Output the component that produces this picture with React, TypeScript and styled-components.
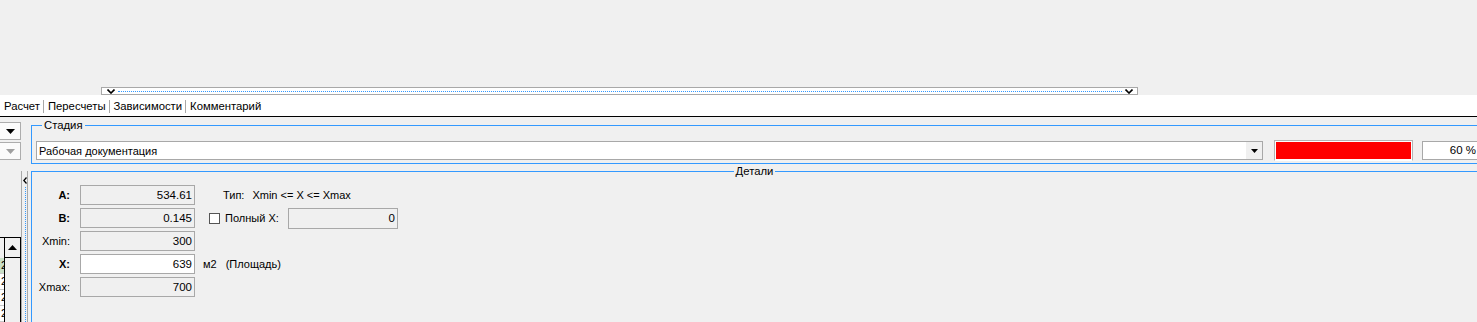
import React from "react";
import styled, { createGlobalStyle } from "styled-components";

const Global = createGlobalStyle`
  html, body { margin: 0; padding: 0; overflow: hidden; background: #f0f0f0; }
  body { font-family: "Liberation Sans", Arial, sans-serif; font-size: 11px; color: #000; }
  * { box-sizing: border-box; }
`;

const BLUE = "#3399ff";
const GREY = "#a8a8a8";

const Page = styled.div`
  width: 1477px;
  height: 322px;
  display: flex;
  flex-direction: column;
  overflow: hidden;
`;

const TopBlank = styled.div`
  height: 87px;
  flex-shrink: 0;
`;

const HSplitter = styled.div`
  margin-left: 101px;
  width: 1037px;
  height: 8px;
  flex-shrink: 0;
  border: 1px solid ${GREY};
  background: #fff;
  display: flex;
  align-items: center;
  padding: 0 4px 0 5px;
  gap: 3px;
`;

const DottedLine = styled.div`
  flex: 1;
  border-top: 1px dotted ${BLUE};
`;

const TabStrip = styled.div`
  height: 22px;
  flex-shrink: 0;
  background: #fff;
  border-bottom: 1px solid #000;
  display: flex;
  align-items: center;
  padding-top: 1px;
`;

const Tab = styled.div`
  padding: 0 3px 0 4px;
  line-height: 13px;
  font-size: 11.3px;
  & + & { border-left: 1px solid ${GREY}; }
`;

const Main = styled.div`
  flex: 1;
  display: flex;
  min-height: 0;
`;

const LeftCol = styled.div`
  width: 31px;
  flex-shrink: 0;
  display: flex;
  flex-direction: column;
`;

const DropBtn = styled.div<{ $top: number }>`
  width: 21px;
  height: 19px;
  margin-top: ${(p) => p.$top}px;
  border: 1px solid #adadad;
  border-left: none;
  background: #fbfbfb;
  display: flex;
  align-items: center;
  justify-content: center;
`;

const SideRow = styled.div`
  margin-top: 11px;
  flex: 1;
  display: flex;
`;

const GridStrip = styled.div`
  width: 21px;
  padding-top: 66px;
  display: flex;
  flex-direction: column;
`;

const GridInner = styled.div`
  flex: 1;
  display: flex;
  border-top: 1px solid #000;
`;

const CellCol = styled.div`
  width: 4px;
  overflow: hidden;
  padding-top: 20px;
  display: flex;
  flex-direction: column;
`;

const Cell = styled.div<{ $bg: string }>`
  height: 16px;
  background: ${(p) => p.$bg};
  border-bottom: 1px solid #c8c8c8;
  display: flex;
  justify-content: flex-end;
  line-height: 15px;
  font-size: 11px;
`;

const CellText = styled.span`
  margin-right: -3px;
`;

const ScrollCol = styled.div`
  width: 17px;
  border-left: 1px solid #000;
  border-right: 1px solid #000;
  background: #f0f0f0;
  display: flex;
  flex-direction: column;
`;

const ScrollBtn = styled.div`
  height: 20px;
  border-bottom: 1px solid #000;
  display: flex;
  align-items: center;
  justify-content: center;
  background: #f0f0f0;
`;

const VSplitter = styled.div`
  width: 7px;
  border-left: 1px solid ${GREY};
  border-right: 1px solid ${GREY};
  display: flex;
  flex-direction: column;
  align-items: center;
  padding-top: 6px;
  gap: 3px;
`;

const VDots = styled.div`
  flex: 1;
  border-left: 1px dotted ${BLUE};
  margin-left: 1px;
`;

const Content = styled.div`
  flex: 1;
  display: flex;
  flex-direction: column;
  padding-top: 8px;
  min-width: 0;
`;

const Group = styled.div<{ $fill?: boolean }>`
  border: 1px solid ${BLUE};
  border-right: none;
  ${(p) => (p.$fill ? "flex: 1; border-bottom: none; margin-top: 7px;" : "padding: 0 0 2px 4px;")}
`;

const Legend = styled.div<{ $center?: boolean }>`
  width: fit-content;
  margin: ${(p) => (p.$center ? "-7px auto 0" : "-7px 0 0 6px")};
  padding: 0 2px;
  line-height: 13px;
  font-size: 11.3px;
  background: #f0f0f0;
`;

const StageRow = styled.div`
  margin-top: 8px;
  height: 21px;
  display: flex;
  align-items: center;
  & > * { flex-shrink: 0; }
`;

const Combo = styled.div`
  width: 1227px;
  height: 19px;
  border: 1px solid ${GREY};
  background: #fff;
  display: flex;
  align-items: center;
  padding-left: 2px;
`;

const ComboText = styled.div`
  flex: 1;
`;

const ComboBtn = styled.div`
  width: 16px;
  height: 17px;
  background: #f0f0f0;
  display: flex;
  align-items: center;
  justify-content: center;
`;

const Progress = styled.div`
  margin-left: 11px;
  width: 139px;
  height: 21px;
  border: 1px solid #b4b4b4;
  border-bottom-color: #fff;
  padding: 1px;
  background: #fff;
  display: flex;
`;

const ProgressFill = styled.div`
  flex: 1;
  background: #ff0000;
`;

const Percent = styled.div`
  margin-left: 9px;
  width: 60px;
  height: 19px;
  border: 1px solid ${GREY};
  background: #fff;
  text-align: right;
  padding-right: 5px;
  line-height: 17px;
  font-size: 11.5px;
`;

const DetailsGrid = styled.div`
  margin-top: 7px;
  display: grid;
  grid-template-columns: 40px 115px auto;
  grid-auto-rows: 20px;
  column-gap: 8px;
  row-gap: 3px;
  align-items: center;
`;

const Label = styled.div<{ $bold?: boolean }>`
  text-align: right;
  padding-right: 2px;
  font-weight: ${(p) => (p.$bold ? "bold" : "normal")};
  font-size: 11px;
`;

const Field = styled.div<{ $white?: boolean; $w?: number; $h?: number }>`
  width: ${(p) => p.$w ?? 115}px;
  height: ${(p) => p.$h ?? 20}px;
  border: 1px solid ${GREY};
  background: ${(p) => (p.$white ? "#fff" : "#f0f0f0")};
  text-align: right;
  padding-right: 2px;
  line-height: ${(p) => (p.$h ?? 20) - 2}px;
  font-size: 11.5px;
`;

const Extra = styled.div<{ $indent: number; $gap: number }>`
  display: flex;
  align-items: center;
  padding-left: ${(p) => p.$indent}px;
  gap: ${(p) => p.$gap}px;
  white-space: nowrap;
`;

const Check = styled.div`
  width: 11px;
  height: 11px;
  border: 1px solid #555;
  background: #fff;
`;

const CheckLabel = styled.div`
  width: 57px;
  margin-left: -1px;
`;

const Chevron = ({ dir }: { dir: "down" | "left" }) =>
  dir === "down" ? (
    <svg width="8" height="5" viewBox="0 0 8 5">
      <path d="M0.5 0.5 L4 4 L7.5 0.5" stroke="#000" strokeWidth="1.6" fill="none" />
    </svg>
  ) : (
    <svg width="4" height="7" viewBox="0 0 4 7">
      <path d="M3.5 0.5 L0.8 3.5 L3.5 6.5" stroke="#000" strokeWidth="1.3" fill="none" />
    </svg>
  );

const Tri = ({ up, color = "#000" }: { up?: boolean; color?: string }) => (
  <svg width="9" height="5" viewBox="0 0 9 5">
    <path d={up ? "M0 5 L4.5 0 L9 5 Z" : "M0 0 L9 0 L4.5 5 Z"} fill={color} />
  </svg>
);

const SmallTri = () => (
  <svg width="7" height="4" viewBox="0 0 7 4">
    <path d="M0 0 L7 0 L3.5 4 Z" fill="#000" />
  </svg>
);

const cells = ["#c9dfc6", "#ffffff", "#ffffff", "#ffffff"];

export default function App() {
  return (
    <Page>
      <Global />
      <TopBlank />
      <HSplitter>
        <Chevron dir="down" />
        <DottedLine />
        <Chevron dir="down" />
      </HSplitter>
      <TabStrip>
        <Tab>Расчет</Tab>
        <Tab>Пересчеты</Tab>
        <Tab>Зависимости</Tab>
        <Tab>Комментарий</Tab>
      </TabStrip>
      <Main>
        <LeftCol>
          <DropBtn $top={5}>
            <Tri />
          </DropBtn>
          <DropBtn $top={2}>
            <Tri color="#a0a0a0" />
          </DropBtn>
          <SideRow>
            <GridStrip>
              <GridInner>
                <CellCol>
                  {cells.map((c, i) => (
                    <Cell key={i} $bg={c}>
                      <CellText>2</CellText>
                    </Cell>
                  ))}
                </CellCol>
                <ScrollCol>
                  <ScrollBtn>
                    <Tri up />
                  </ScrollBtn>
                </ScrollCol>
              </GridInner>
            </GridStrip>
            <VSplitter>
              <Chevron dir="left" />
              <VDots />
            </VSplitter>
          </SideRow>
        </LeftCol>
        <Content>
          <Group>
            <Legend>Стадия</Legend>
            <StageRow>
              <Combo>
                <ComboText>Рабочая документация</ComboText>
                <ComboBtn>
                  <SmallTri />
                </ComboBtn>
              </Combo>
              <Progress>
                <ProgressFill />
              </Progress>
              <Percent>60 %</Percent>
            </StageRow>
          </Group>
          <Group $fill>
            <Legend $center>Детали</Legend>
            <DetailsGrid>
              <Label $bold>A:</Label>
              <Field>534.61</Field>
              <Extra $indent={20} $gap={8}>
                <span>Тип:</span>
                <span>Xmin &lt;= X &lt;= Xmax</span>
              </Extra>

              <Label $bold>B:</Label>
              <Field>0.145</Field>
              <Extra $indent={6} $gap={6}>
                <Check />
                <CheckLabel>Полный X:</CheckLabel>
                <Field $w={110} $h={21}>0</Field>
              </Extra>

              <Label>Xmin:</Label>
              <Field>300</Field>
              <div />

              <Label $bold>X:</Label>
              <Field $white>639</Field>
              <Extra $indent={0} $gap={9}>
                <span>м2</span>
                <span>(Площадь)</span>
              </Extra>

              <Label>Xmax:</Label>
              <Field>700</Field>
              <div />
            </DetailsGrid>
          </Group>
        </Content>
      </Main>
    </Page>
  );
}
